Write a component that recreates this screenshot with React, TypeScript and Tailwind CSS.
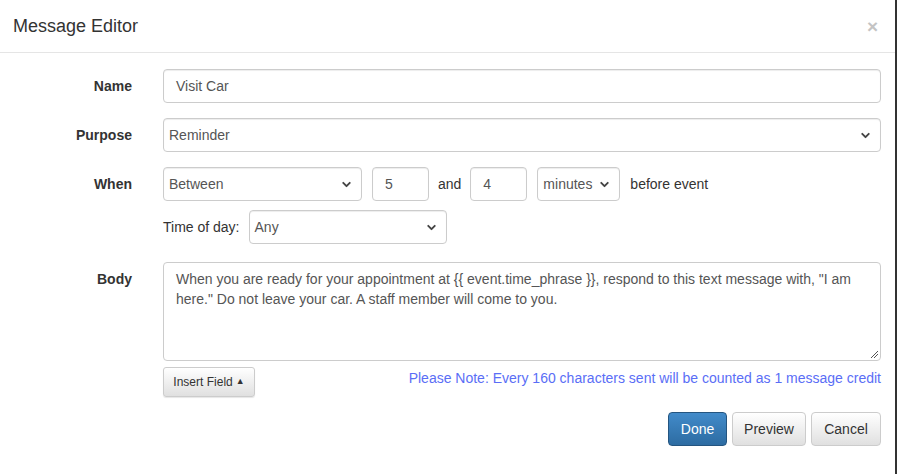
import { ChevronDown } from "lucide-react";

const field =
  "h-[34px] rounded border border-[#ccc] bg-white px-3 text-[14px] text-[#555] flex items-center shadow-[inset_0_1px_1px_rgba(0,0,0,0.075)]";

const body =
  'When you are ready for your appointment at {{ event.time_phrase }}, respond to this text message with, "I am here." Do not leave your car. A staff member will come to you.';

function Select({ value, className }: { value: string; className: string }) {
  return (
    <div className={`${field} pl-[5px] pr-[8px] justify-between ${className}`}>
      <span>{value}</span>
      <ChevronDown size={13} strokeWidth={3.5} className="text-[#444]" />
    </div>
  );
}

function Label({ children }: { children: string }) {
  return (
    <div className="w-[163px] shrink-0 pr-[31px] text-right text-[14px] font-bold text-[#333] leading-[34px]">
      {children}
    </div>
  );
}

export default function App() {
  return (
    <div className="flex h-[474px] w-[897px] bg-[#333] font-['Liberation_Sans',Arial,sans-serif]">
      <div className="h-full w-[895px] bg-white">
        <div className="flex h-[53px] items-center justify-between border-b border-[#e5e5e5] pl-[13px] pr-[17px]">
          <h4 className="text-[18px] text-[#333]">Message Editor</h4>
          <span className="text-[19px] font-bold leading-none text-[#c4c4c4]">×</span>
        </div>

        <div className="flex flex-col gap-[15px] pr-[14px] pt-[16px]">
          <div className="flex">
            <Label>Name</Label>
            <div className={`${field} flex-1`}>Visit Car</div>
          </div>

          <div className="flex">
            <Label>Purpose</Label>
            <Select value="Reminder" className="flex-1" />
          </div>

          <div className="flex">
            <Label>When</Label>
            <div className="flex flex-col gap-[9px]">
              <div className="flex items-center text-[14px] text-[#333]">
                <Select value="Between" className="w-[199px]" />
                <div className={`${field} ml-[10px] w-[57px]`}>5</div>
                <span className="ml-[9px]">and</span>
                <div className={`${field} ml-[9px] w-[57px]`}>4</div>
                <Select value="minutes" className="ml-[10px] w-[83px]" />
                <span className="ml-[10px]">before event</span>
              </div>
              <div className="flex items-center text-[14px] text-[#333]">
                <span>Time of day:</span>
                <Select value="Any" className="ml-[9px] w-[198px]" />
              </div>
            </div>
          </div>

          <div className="flex pt-[3px]">
            <Label>Body</Label>
            <div className="flex flex-1 flex-col">
              <div className="relative h-[99px] rounded border border-[#ccc] px-3 py-[6px] text-[14px] leading-[20px] text-[#555]">
                <p>{body}</p>
                <svg
                  className="absolute bottom-[2px] right-[2px]"
                  width="8"
                  height="8"
                  viewBox="0 0 8 8"
                >
                  <path d="M1 8 L8 1 M4 8 L8 4" stroke="#555" strokeWidth="1" />
                </svg>
              </div>
              <div className="mt-[6px] flex items-start justify-between">
                <button className="flex h-[30px] w-[92px] items-center justify-center gap-[3px] rounded-[3px] border border-[#ccc] bg-gradient-to-b from-white to-[#e0e0e0] text-[12px] text-[#333] shadow-[0_1px_1px_rgba(0,0,0,0.1)]">
                  Insert Field
                  <span className="text-[9px]">▲</span>
                </button>
                <span className="mt-[1px] text-[14px] text-[#5a6ef6]">
                  Please Note: Every 160 characters sent will be counted as 1 message credit
                </span>
              </div>
            </div>
          </div>

          <div className="flex justify-end gap-[5px]">
            <button className="h-[34px] w-[59px] rounded border border-[#245580] bg-gradient-to-b from-[#428bca] to-[#2d6ca2] text-[14px] text-white">
              Done
            </button>
            <button className="h-[34px] w-[74px] rounded border border-[#ccc] bg-gradient-to-b from-white to-[#e0e0e0] text-[14px] text-[#333]">
              Preview
            </button>
            <button className="h-[34px] w-[70px] rounded border border-[#ccc] bg-gradient-to-b from-white to-[#e0e0e0] text-[14px] text-[#333]">
              Cancel
            </button>
          </div>
        </div>
      </div>
    </div>
  );
}
